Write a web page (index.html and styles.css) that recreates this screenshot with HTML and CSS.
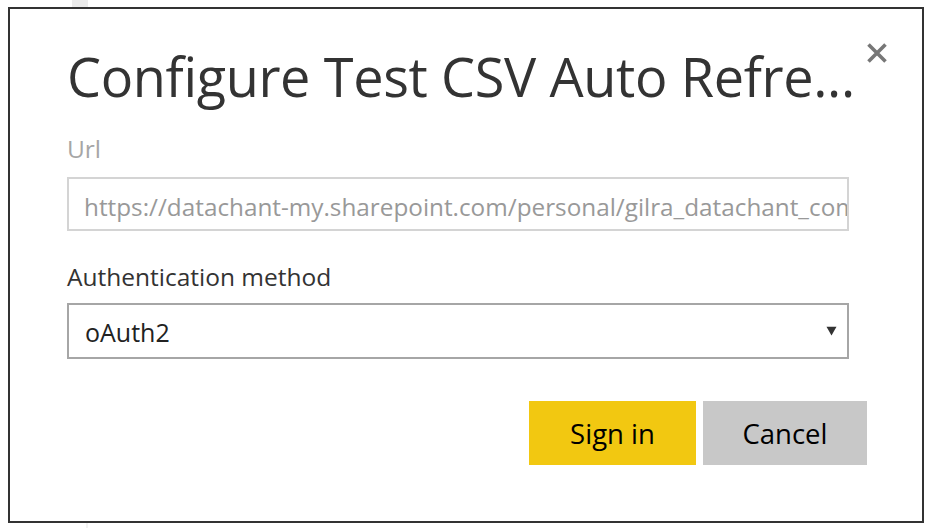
FILE: index.html
```html
<!DOCTYPE html>
<html lang="en">
<head>
<meta charset="utf-8">
<title>Configure Test CSV Auto Refresh</title>
<link rel="stylesheet" href="styles.css">
</head>
<body>
<div class="strip strip-top"></div>
<div class="dialog">
  <div class="header">
    <h1 class="title">Configure Test CSV Auto Refre...</h1>
    <button class="close" aria-label="Close">
      <svg width="22" height="22" viewBox="0 0 22 22"><path d="M2.5 2.5 L19.5 19.5 M19.5 2.5 L2.5 19.5" stroke="#777" stroke-width="3.6" stroke-linecap="butt" fill="none"/></svg>
    </button>
  </div>
  <div class="field">
    <div class="label muted">Url</div>
    <div class="input">https://datachant-my.sharepoint.com/personal/gilra_datachant_com/Documents/Test%20CSV.csv</div>
  </div>
  <div class="field">
    <div class="label">Authentication method</div>
    <div class="select">
      <span>oAuth2</span>
      <svg class="caret" width="11" height="10" viewBox="0 0 11 10"><path d="M0.5 0.8 H10.5 L5.5 9.5 Z" fill="#333"/></svg>
    </div>
  </div>
  <div class="actions">
    <button class="btn primary">Sign in</button>
    <button class="btn secondary">Cancel</button>
  </div>
</div>
<div class="strip strip-bottom"></div>
</body>
</html>
```

FILE: styles.css
```css
* { box-sizing: border-box; }
html, body { margin: 0; padding: 0; background: #fff; }
body {
  font-family: "Open Sans", "Noto Sans", "Liberation Sans", sans-serif;
  color: #333;
  width: 930px;
  height: 528px;
  overflow: hidden;
}
.strip { background: #ebebeb; }
.strip-top { width: 16px; height: 7px; margin-left: 72px; }
.strip-bottom { width: 2px; height: 5px; margin-left: 86px; background: #f2f2f2; }
.dialog {
  margin-left: 8px;
  width: 916px;
  height: 516px;
  border: 2px solid #333;
  padding: 37px 72px 0 57px;
  position: relative;
}
.header { display: flex; align-items: flex-start; }
.title {
  margin: 0;
  font-weight: 400;
  font-size: 54px;
  line-height: 60px;
  letter-spacing: -0.35px;
  color: #333;
  white-space: nowrap;
}
.close {
  position: absolute;
  top: 33px;
  right: 34px;
  border: 0;
  background: none;
  padding: 0;
  width: 22px;
  height: 22px;
}
.close svg { display: block; }
.field { width: 782px; }
.label {
  font-size: 24.5px;
  line-height: 30px;
  margin-top: 28px;
  margin-bottom: 13px;
}
.field + .field .label { margin-top: 31px; margin-bottom: 11px; }
.muted { color: #a6a6a6; }
.input {
  height: 54px;
  border: 2px solid #d4d4d4;
  padding: 6px 0 0 15px;
  font-size: 24.3px;
  line-height: 44px;
  color: #999;
  white-space: nowrap;
  overflow: hidden;
}
.select {
  height: 56px;
  border: 2px solid #a6a6a6;
  padding: 2px 10px 0 16px;
  display: flex;
  align-items: center;
  justify-content: space-between;
  font-size: 25px;
  color: #222;
}
.caret { display: block; margin-top: -2px; }
.actions {
  display: flex;
  justify-content: flex-end;
  gap: 7px;
  margin-top: 42px;
  margin-right: -17px;
}
.btn {
  border: 0;
  height: 64px;
  font-family: inherit;
  font-size: 27.5px;
  color: #000;
  padding: 0;
}
.primary { width: 167px; background: #f2c811; }
.secondary { width: 164px; background: #c8c8c8; }
```
